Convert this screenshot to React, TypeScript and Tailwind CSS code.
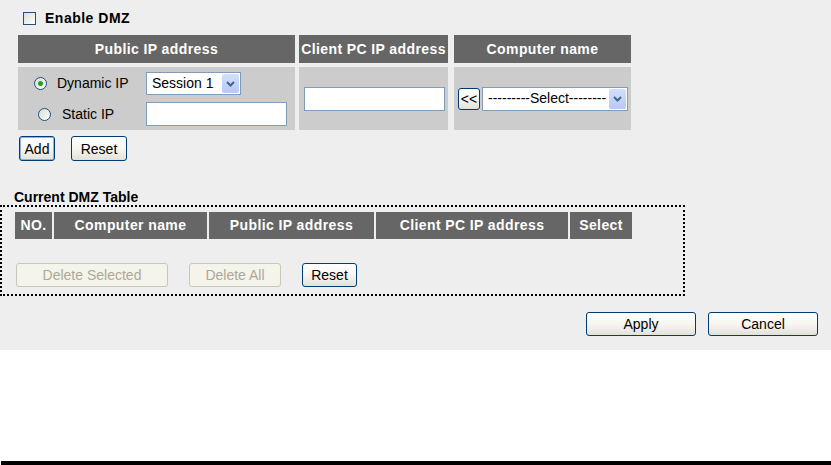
import React from 'react';

const btn =
  'flex items-center justify-center rounded-[3px] border border-[#003c74] bg-linear-to-b from-white via-[#f7f6f1] to-[#e3e1d7] text-[14px] text-black leading-none';
const btnOff =
  'flex items-center justify-center rounded-[3px] border border-[#c9c7ba] bg-[#f5f4ea] text-[14px] text-[#aca899] leading-none';
const th = 'flex items-center justify-center bg-[#666666] text-white font-bold text-[14px] tracking-[0.4px]';

function Chevron() {
  return (
    <svg width="9" height="6" viewBox="0 0 9 6">
      <path d="M1 1 L4.5 4.5 L8 1" fill="none" stroke="#4d6185" strokeWidth="2" />
    </svg>
  );
}

function XpSelect({ label, className }: { label: string; className: string }) {
  return (
    <div className={`flex items-center border border-[#7f9db9] bg-white p-[1px] ${className}`}>
      <span className="flex-1 truncate pl-[4px] text-[14px] text-black">{label}</span>
      <span className="flex h-full w-[17px] items-center justify-center rounded-[2px] bg-linear-to-b from-[#d3e0fd] to-[#b4c9f6]">
        <Chevron />
      </span>
    </div>
  );
}

function Radio({ checked }: { checked?: boolean }) {
  return (
    <span className="flex h-[13px] w-[13px] shrink-0 items-center justify-center rounded-full border border-[#1c5180] bg-linear-to-br from-[#dcdcd7] to-white">
      {checked && <span className="h-[5px] w-[5px] rounded-full bg-[#21a121]" />}
    </span>
  );
}

function TextBox({ className }: { className: string }) {
  return <div className={`border border-[#7f9db9] bg-white ${className}`} />;
}

export default function App() {
  return (
    <div className="flex h-[465px] w-[831px] flex-col bg-white font-['Liberation_Sans',Arial,sans-serif]">
      <div className="flex h-[350px] flex-col bg-[#eeeeee]">
        {/* enable checkbox */}
        <div className="ml-[23px] mt-[10px] flex h-[17px] items-center gap-[9px]">
          <span className="h-[13px] w-[13px] border border-[#1c5180] bg-linear-to-br from-[#dcdcd7] to-white" />
          <span className="text-[14px] font-bold tracking-[0.5px] text-black">Enable DMZ</span>
        </div>

        {/* entry table */}
        <div className="ml-[18px] mt-[8px] flex flex-col gap-[4px]">
          <div className="flex h-[28px]">
            <div className={`${th} w-[277px]`}>Public IP address</div>
            <div className={`${th} ml-[4px] w-[149px]`}>Client PC IP address</div>
            <div className={`${th} ml-[6px] w-[177px]`}>Computer name</div>
          </div>
          <div className="flex h-[63px]">
            <div className="flex w-[277px] flex-col gap-[7px] bg-[#cccccc] pt-[5px]">
              <div className="flex h-[23px] items-center">
                <div className="flex w-[128px] items-center gap-[10px] pl-[16px]">
                  <Radio checked />
                  <span className="text-[14px] text-black">Dynamic IP</span>
                </div>
                <XpSelect label="Session 1" className="h-[23px] w-[95px]" />
              </div>
              <div className="flex h-[24px] items-center">
                <div className="flex w-[128px] items-center gap-[11px] pl-[20px]">
                  <Radio />
                  <span className="text-[14px] text-black">Static IP</span>
                </div>
                <TextBox className="h-[24px] w-[141px]" />
              </div>
            </div>
            <div className="ml-[4px] flex w-[149px] items-center bg-[#cccccc] pl-[5px]">
              <TextBox className="h-[24px] w-[141px]" />
            </div>
            <div className="ml-[6px] flex w-[177px] items-center gap-[2px] bg-[#cccccc] pl-[4px]">
              <button className={`${btn} h-[22px] w-[22px] text-[14px]`}>&lt;&lt;</button>
              <XpSelect label="---------Select--------" className="h-[24px] w-[146px]" />
            </div>
          </div>
        </div>

        <div className="ml-[19px] mt-[6px] flex gap-[16px]">
          <button className={`${btn} h-[25px] w-[36px] shadow-[inset_0_0_0_1px_#8fb0e6]`}>Add</button>
          <button className={`${btn} h-[25px] w-[56px]`}>Reset</button>
        </div>

        <div className="ml-[14px] mt-[28px] h-[16px] text-[14px] font-bold leading-[16px] text-black">
          Current DMZ Table
        </div>

        {/* current table */}
        <div className="flex w-[685px] flex-col border-2 border-dotted border-black pb-[7px] pl-[13px] pt-[5px]">
          <div className="flex h-[27px] gap-[2px]">
            <div className={`${th} w-[37px]`}>NO.</div>
            <div className={`${th} w-[153px]`}>Computer name</div>
            <div className={`${th} w-[165px]`}>Public IP address</div>
            <div className={`${th} w-[192px]`}>Client PC IP address</div>
            <div className={`${th} w-[62px]`}>Select</div>
          </div>
          <div className="ml-[1px] mt-[24px] flex h-[24px]">
            <button className={`${btnOff} h-[24px] w-[152px]`}>Delete Selected</button>
            <button className={`${btnOff} ml-[21px] h-[24px] w-[92px]`}>Delete All</button>
            <button className={`${btn} ml-[21px] h-[24px] w-[55px]`}>Reset</button>
          </div>
        </div>

        <div className="mr-[13px] mt-[16px] flex justify-end gap-[12px]">
          <button className={`${btn} h-[24px] w-[110px]`}>Apply</button>
          <button className={`${btn} h-[24px] w-[110px]`}>Cancel</button>
        </div>
      </div>

      <div className="flex-1" />
      <div className="ml-[1px] h-[4px] bg-black" />
    </div>
  );
}
